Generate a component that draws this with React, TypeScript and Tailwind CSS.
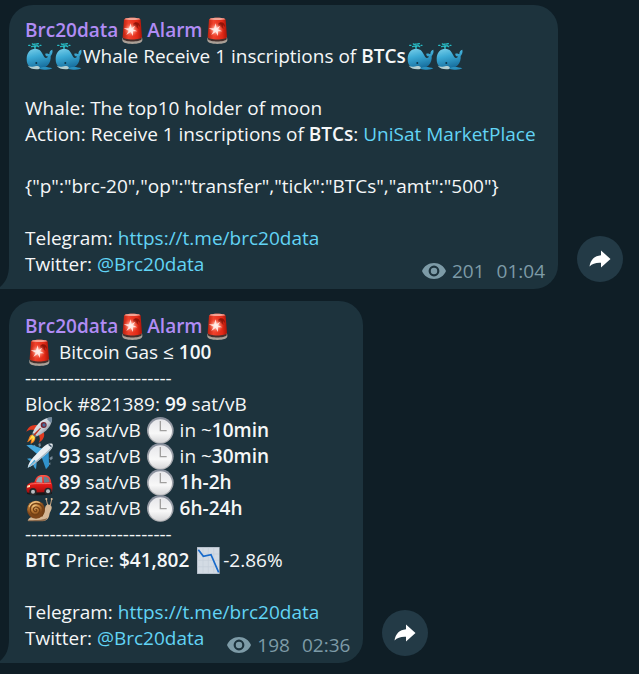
import type { ReactNode } from "react";

const drawings = {
  siren: (
    <>
      <defs>
        <linearGradient id="siren-glass" x1="0" x2="1" y1="0" y2="0">
          <stop offset="0" stopColor="#b8200f" />
          <stop offset="0.3" stopColor="#f0422c" />
          <stop offset="0.75" stopColor="#e22a17" />
          <stop offset="1" stopColor="#a81408" />
        </linearGradient>
        <radialGradient id="siren-glow">
          <stop offset="0" stopColor="#fff" />
          <stop offset="0.45" stopColor="#ff9a86" stopOpacity="0.8" />
          <stop offset="1" stopColor="#f0422c" stopOpacity="0" />
        </radialGradient>
      </defs>
      <path d="M10 66 C10 60 16 60 20 60 H60 C66 60 70 60 70 66 V70 C70 77 58 81 40 81 S10 77 10 70Z" fill="#aaa097" />
      <path d="M12 62 H68 V67 C62 76 18 76 12 67Z" fill="#47302d" />
      <path d="M15 8 C16 0 64 0 65 8 L69 59 C68 70 12 70 11 59Z" fill="url(#siren-glass)" />
      <path d="M16 7 C20 1 60 1 64 7 C58 10 22 10 16 7Z" fill="#f4a293" />
      <path d="M42 21 C50 11 64 17 63 30 L57 24 L58 36 C52 32 50 26 43 27Z" fill="#921308" />
      <circle cx="36" cy="38" r="23" fill="url(#siren-glow)" />
      <path d="M35 19 L38 33 L49 26 L42 37 L55 43 L42 43 L42 57 L35 45 L22 54 L29 41 L14 34 L30 34Z" fill="#fff1ed" fillOpacity="0.85" />
    </>
  ),
  whale: (
    <>
      <defs>
        <linearGradient id="whale-body" x1="0" x2="0.3" y1="0" y2="1">
          <stop offset="0" stopColor="#7bd0ea" />
          <stop offset="0.45" stopColor="#3ba9d4" />
          <stop offset="1" stopColor="#176f9f" />
        </linearGradient>
      </defs>
      <path d="M27 19 C28 9 22 8 17 11 M27 19 C26 8 33 6 38 11 M27 12 V2 M19 3 L23 4 M32 3 L37 2 M8 7 H12 M42 7 H45" stroke="#27bbc4" strokeWidth="4" fill="none" strokeLinecap="round" />
      <path d="M2 48 C2 29 13 17 28 17 C42 17 48 28 53 39 C57 47 64 47 66 40 C60 41 57 36 58 32 C64 30 68 34 70 33 C70 26 73 21 79 20 C81 28 78 34 74 39 C76 60 62 78 34 78 C14 78 2 69 2 48Z" fill="url(#whale-body)" />
      <path d="M5 68 C14 74 24 70 30 69 C40 68 44 74 40 78 C25 80 11 77 5 68Z" fill="#b4cdd0" />
      <path d="M40 77 C51 69 68 73 79 76 C73 81 51 81 40 77Z" fill="#2a8fbd" />
      <circle cx="31" cy="60" r="3" fill="#0c3548" />
    </>
  ),
  rocket: (
    <>
      <defs>
        <linearGradient id="rocket-hull" x1="0" x2="1" y1="0" y2="1">
          <stop offset="0.1" stopColor="#f6f8fa" />
          <stop offset="0.55" stopColor="#c4ccd5" />
          <stop offset="0.9" stopColor="#68737f" />
        </linearGradient>
      </defs>
      <path d="M20 52 C8 54 10 66 3 76 C11 74 11 68 16 69 C13 74 15 78 14 81 C21 78 29 72 28 60Z" fill="#f47b20" />
      <path d="M20 54 C13 58 14 64 8 71 C14 68 16 64 20 64 C18 70 19 72 18 75 C25 70 27 64 26 58Z" fill="#ffe14a" />
      <path d="M34 25 C20 21 6 30 1 44 C10 37 17 38 25 39Z" fill="#e03a20" />
      <path d="M53 46 C58 58 51 70 38 78 C44 68 41 60 38 53Z" fill="#e03a20" />
      <path d="M22 45 L35 57 L28 61 L17 51Z" fill="#65707c" />
      <path d="M78 2 C57 0 34 16 20 47 L33 58 C63 44 79 24 78 2Z" fill="url(#rocket-hull)" />
      <path d="M78 2 C72 1 67 3 62 5 L75 18 C78 12 79 7 78 2Z" fill="#71889d" />
      <circle cx="53" cy="24" r="9" fill="#7a2430" />
      <circle cx="54" cy="24" r="5" fill="#426d9f" />
      <path d="M45 34 L26 56 L23 52 L42 33Z" fill="#c12a18" />
    </>
  ),
  plane: (
    <>
      <path d="M37 3 L43 0 L45 9 L39 12Z M70 45 L79 39 L80 47 L74 52Z M21 8 L27 5 L29 12Z M65 63 L73 58 L73 66Z" fill="#778996" />
      <path d="M1 7 L16 5 L58 20 L37 36Z" fill="#46a9dd" />
      <path d="M60 22 L47 43 L60 79 L69 68 L68 24Z" fill="#3193cd" />
      <path d="M3 47 L12 46 L28 52 L32 60 L30 79 L24 72 L20 60Z" fill="#3d9fd6" />
      <path d="M79 2 C70 -1 60 4 51 13 L22 43 C12 54 7 63 5 74 C17 70 25 63 36 54 L67 28 C78 18 83 9 79 2Z" fill="#e9eef2" />
      <path d="M80 8 C77 22 57 36 36 54 C23 65 15 70 5 74 C23 58 58 34 80 8Z" fill="#a5b6c3" />
      <path d="M66 5 L75 13 L78 9 L70 3Z" fill="#3e5568" />
      <path d="M4 76 L25 50 L29 54Z" fill="#48a6d8" />
    </>
  ),
  car: (
    <>
      <defs>
        <linearGradient id="car-paint" x1="0" x2="0" y1="0" y2="1">
          <stop offset="0" stopColor="#ff5648" />
          <stop offset="0.5" stopColor="#ea1c19" />
          <stop offset="1" stopColor="#a40d0e" />
        </linearGradient>
      </defs>
      <path d="M3 69 H78 V74 C55 81 18 80 3 74Z" fill="#17191b" />
      <path d="M2 52 C4 43 16 41 25 40 C30 24 35 18 50 18 C67 18 74 23 76 41 C80 46 80 61 78 69 L5 71 C0 67 1 59 2 52Z" fill="url(#car-paint)" />
      <path d="M30 40 C34 26 38 23 48 23 L49 41Z" fill="#91a9b5" />
      <path d="M53 23 C66 23 69 27 71 40 L54 41Z" fill="#687f8c" />
      <path d="M4 50 L12 47 L12 54 L3 56Z" fill="#ffe9b8" />
      <path d="M12 46 C25 42 50 45 75 43" stroke="#ff9387" strokeWidth="2" fill="none" />
      <circle cx="21" cy="68" r="11" fill="#25282b" />
      <circle cx="21" cy="68" r="6" fill="#b9bec2" />
      <circle cx="66" cy="67" r="11" fill="#25282b" />
      <circle cx="66" cy="67" r="6" fill="#b9bec2" />
    </>
  ),
  snail: (
    <>
      <defs>
        <radialGradient id="snail-shell" cx="0.4" cy="0.3">
          <stop offset="0" stopColor="#f1c57d" />
          <stop offset="0.6" stopColor="#bd7a35" />
          <stop offset="1" stopColor="#7d4519" />
        </radialGradient>
      </defs>
      <path d="M65 31 L61 13 M73 31 L77 13" stroke="#c4a382" strokeWidth="3" />
      <circle cx="61" cy="12" r="3" fill="#e0c09a" />
      <circle cx="77" cy="12" r="3" fill="#e0c09a" />
      <path d="M5 77 C10 62 27 66 44 62 C58 59 55 42 59 33 C64 26 76 27 77 37 C78 45 71 50 70 59 C68 72 60 78 47 78Z" fill="#d5b694" />
      <path d="M5 77 C21 73 50 77 65 68 C60 77 54 79 45 79 H7Z" fill="#8c6a4c" />
      <circle cx="30" cy="44" r="27" fill="url(#snail-shell)" />
      <path d="M48 63 C59 39 43 23 27 26 C10 29 8 53 24 59 C39 63 47 43 35 37 C24 32 18 45 26 49 C32 51 35 45 30 43" stroke="#734015" strokeWidth="4" fill="none" strokeLinecap="round" />
      <path d="M10 35 C15 22 29 17 41 23" stroke="#f6d69b" strokeWidth="3" fill="none" />
    </>
  ),
  clock: (
    <>
      <defs>
        <linearGradient id="clock-rim" x1="0" x2="0" y1="0" y2="1">
          <stop offset="0" stopColor="#858c9a" />
          <stop offset="1" stopColor="#b4b4b7" />
        </linearGradient>
        <linearGradient id="clock-face" x1="0" x2="0" y1="0" y2="1">
          <stop offset="0" stopColor="#e6e6ea" />
          <stop offset="0.6" stopColor="#f8f8f8" />
          <stop offset="1" stopColor="#d6d6d8" />
        </linearGradient>
      </defs>
      <circle cx="40" cy="40" r="40" fill="url(#clock-rim)" />
      <circle cx="40" cy="42" r="35" fill="url(#clock-face)" />
      <path d="M40 12 V41 H59" stroke="#a09f9e" strokeWidth="4" fill="none" />
    </>
  ),
  chart: (
    <>
      <path d="M6 0 H74 V81 H6Z" fill="#a9b4c0" />
      <path d="M8 2 H72 V79 H8Z" fill="#d3dbe4" />
      <path d="M8 21 H72 M8 40 H72 M8 59 H72 M24 2 V79 M40 2 V79 M56 2 V79" stroke="#c5cfda" strokeWidth="2" />
      <path d="M10 8 L25 28 L48 23 L71 76" stroke="#176acb" strokeWidth="5" fill="none" />
    </>
  ),
};

function Emoji({ name }: { name: keyof typeof drawings }) {
  return (
    <span className="inline-flex h-[26px] w-[29px] items-center justify-center align-top">
      <svg viewBox="0 0 81 81" className="size-[27px] shrink-0" role="img" aria-label={name}>
        {drawings[name]}
      </svg>
    </span>
  );
}

function ExternalLink({ href, children }: { href: string; children: ReactNode }) {
  return (
    <a href={href} className="text-[#62d4f5] hover:underline">
      {children}
    </a>
  );
}

function Bold({ children }: { children: ReactNode }) {
  return <strong className="font-semibold">{children}</strong>;
}

type MessageProps = {
  views: number;
  time: string;
  wide?: boolean;
  children: ReactNode;
};

function Message({ views, time, wide, children }: MessageProps) {
  return (
    <article className="flex items-end gap-[19px]">
      <div className={`relative rounded-3xl rounded-bl-none bg-[#1d333d] px-4 py-3 ${wide ? "basis-[549px]" : ""}`}>
        {/* Bubble tail */}
        <svg viewBox="0 0 9 24" className="absolute bottom-0 -left-[9px] h-6 w-[9px]" aria-hidden="true">
          <path d="M9 0 C9 10 6 17 0 22 V24 H9Z" fill="#1d333d" />
        </svg>

        <h2 className="font-semibold text-[#b18cf5]">
          Brc20data
          <Emoji name="siren" />
          Alarm
          <Emoji name="siren" />
        </h2>
        {children}
        <p className="mt-[26px]">
          Telegram: <ExternalLink href="https://t.me/brc20data">https://t.me/brc20data</ExternalLink>
        </p>
        <div className="flex justify-between gap-[23px]">
          <p>
            Twitter: <ExternalLink href="https://twitter.com/Brc20data">@Brc20data</ExternalLink>
          </p>
          {/* Views and time */}
          <div className="-mr-[3px] -mb-[7px] flex items-center self-end text-[#7d9ba7]">
            <svg viewBox="0 0 24 16" className="mr-[6px] h-4 w-6" aria-hidden="true">
              <path
                fillRule="evenodd"
                fill="currentColor"
                d="M12 0 C6.5 0 2 3.2 0 8 C2 12.8 6.5 16 12 16 S22 12.8 24 8 C22 3.2 17.5 0 12 0Z M12 2.6 A5.4 5.4 0 1 1 12 13.4 A5.4 5.4 0 1 1 12 2.6Z M12 4.8 A3.2 3.2 0 1 0 12 11.2 A3.2 3.2 0 1 0 12 4.8Z"
              />
            </svg>
            <span>{views}</span>
            <time className="ml-3">{time}</time>
          </div>
        </div>
      </div>

      <button
        type="button"
        aria-label="Share message"
        className="mb-[7px] flex size-[46px] shrink-0 items-center justify-center rounded-full bg-[#233a46] text-white"
      >
        <svg viewBox="0 0 22 18" className="h-[18px] w-[22px]" aria-hidden="true">
          <path d="M12 0.5 L21.5 9 L12 17.5 V12.7 C7 12.4 3.5 13.5 0.5 16.5 C1.5 9.8 5.5 5.8 12 5.2Z" fill="currentColor" />
        </svg>
      </button>
    </article>
  );
}

const fees = [
  { emoji: "rocket", rate: 96, prefix: "in ~", wait: "10min" },
  { emoji: "plane", rate: 93, prefix: "in ~", wait: "30min" },
  { emoji: "car", rate: 89, prefix: "", wait: "1h-2h" },
  { emoji: "snail", rate: 22, prefix: "", wait: "6h-24h" },
] as const;

export default function App() {
  return (
    <main className="flex min-h-screen flex-col gap-3 bg-[#0f1e26] pt-[5px] pb-[11px] pl-[9px] font-['Open_Sans',sans-serif] text-[19px] leading-[26px] text-[#f5f7f8]">
      <Message views={201} time="01:04" wide>
        <p>
          <Emoji name="whale" />
          <Emoji name="whale" />
          Whale Receive 1 inscriptions of <Bold>BTCs</Bold>
          <Emoji name="whale" />
          <Emoji name="whale" />
        </p>
        <p className="mt-[26px]">Whale: The top10 holder of moon</p>
        <p>
          Action: Receive 1 inscriptions of <Bold>BTCs</Bold>:{" "}
          <ExternalLink href="https://unisat.io/market">UniSat MarketPlace</ExternalLink>
        </p>
        <p className="mt-[26px]">{'{"p":"brc-20","op":"transfer","tick":"BTCs","amt":"500"}'}</p>
      </Message>

      <Message views={198} time="02:36">
        <p>
          <Emoji name="siren" /> Bitcoin Gas ≤ <Bold>100</Bold>
        </p>
        <p>------------------------</p>
        <p>
          Block #821389: <Bold>99</Bold> sat/vB
        </p>
        {fees.map((fee) => (
          <p key={fee.rate}>
            <Emoji name={fee.emoji} /> <Bold>{fee.rate}</Bold> sat/vB <Emoji name="clock" /> {fee.prefix}
            <Bold>{fee.wait}</Bold>
          </p>
        ))}
        <p>------------------------</p>
        <p>
          <Bold>BTC</Bold> Price: <Bold>$41,802</Bold> <Emoji name="chart" />
          -2.86%
        </p>
      </Message>
    </main>
  );
}
